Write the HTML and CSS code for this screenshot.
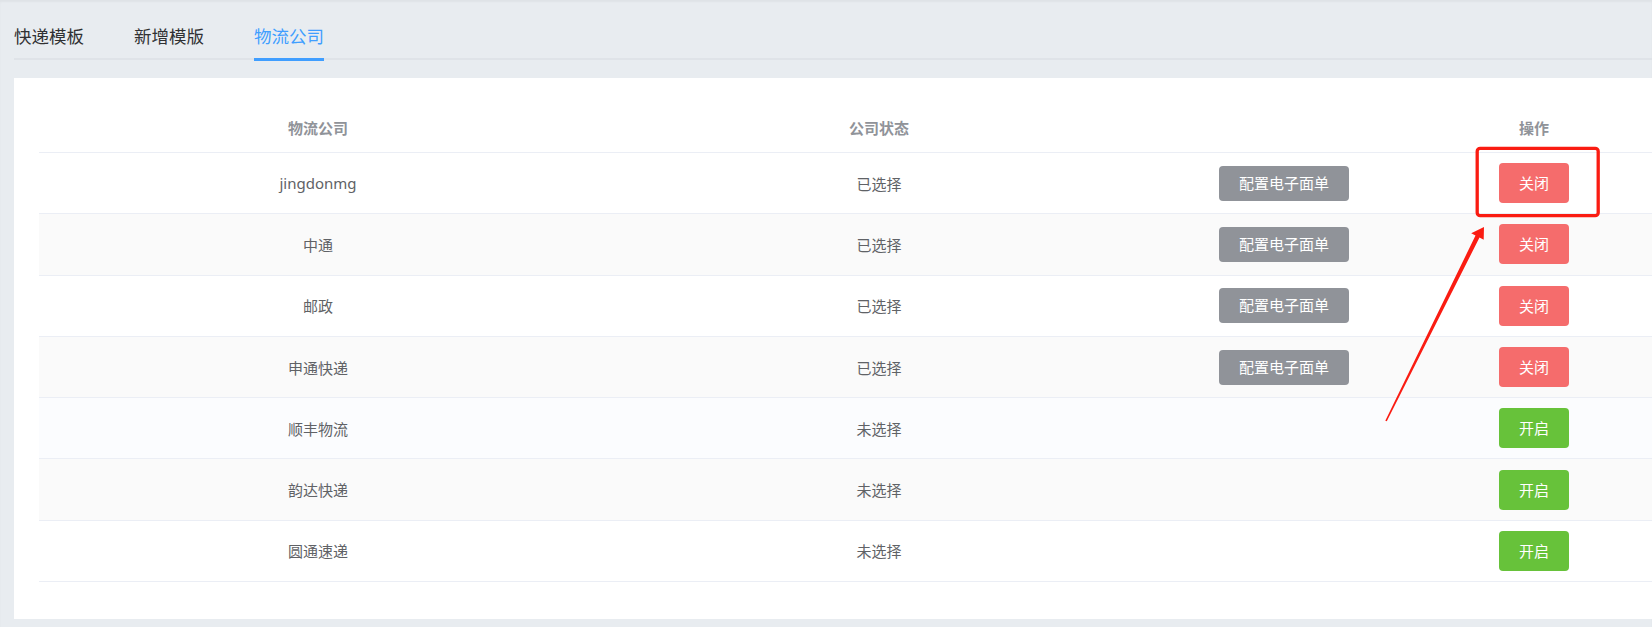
FILE: index.html
```html
<!DOCTYPE html>
<html lang="zh-CN">
<head>
<meta charset="utf-8" />
<title>物流公司</title>
<link rel="stylesheet" href="styles.css">
</head>
<body>
<div class="page">
  <div class="tabs">
    <div class="tab">快递模板</div>
    <div class="tab">新增模版</div>
    <div class="tab active">物流公司</div>
  </div>

  <div class="card">
    <table class="grid">
      <colgroup>
        <col class="c1" /><col class="c2" /><col class="c3" /><col class="c4" />
      </colgroup>
      <thead>
        <tr><th>物流公司</th><th>公司状态</th><th></th><th>操作</th></tr>
      </thead>
      <tbody>
        <tr>
          <td>jingdonmg</td><td>已选择</td>
          <td><span class="btn btn-info">配置电子面单</span></td>
          <td><span class="btn btn-danger">关闭</span></td>
        </tr>
        <tr class="stripe">
          <td>中通</td><td>已选择</td>
          <td><span class="btn btn-info">配置电子面单</span></td>
          <td><span class="btn btn-danger">关闭</span></td>
        </tr>
        <tr>
          <td>邮政</td><td>已选择</td>
          <td><span class="btn btn-info">配置电子面单</span></td>
          <td><span class="btn btn-danger">关闭</span></td>
        </tr>
        <tr class="stripe">
          <td>申通快递</td><td>已选择</td>
          <td><span class="btn btn-info">配置电子面单</span></td>
          <td><span class="btn btn-danger">关闭</span></td>
        </tr>
        <tr class="hover">
          <td>顺丰物流</td><td>未选择</td>
          <td></td>
          <td><span class="btn btn-success">开启</span></td>
        </tr>
        <tr class="stripe">
          <td>韵达快递</td><td>未选择</td>
          <td></td>
          <td><span class="btn btn-success">开启</span></td>
        </tr>
        <tr>
          <td>圆通速递</td><td>未选择</td>
          <td></td>
          <td><span class="btn btn-success">开启</span></td>
        </tr>
      </tbody>
    </table>
  </div>
</div>

<!-- screenshot annotation drawn over the table -->
<svg class="markup" width="1652" height="627" viewBox="0 0 1652 627">
  <rect x="1477.2" y="148.3" width="121" height="67.4" rx="3" fill="none" stroke="#fa1c12" stroke-width="3.3" />
  <polygon fill="#fa1c12" points="1484,227 1483.7,239.7 1479.5,237.5 1386.8,421.3 1385.3,420.7 1475.5,235.5 1471.2,233.3" />
</svg>
</body>
</html>
```

FILE: styles.css
```css
html, body { margin: 0; padding: 0; }
body {
  background: #e8ecf0;
  box-shadow: inset 0 2px 2px rgba(0, 0, 0, 0.04);
  font-family: "Noto Sans", "Noto Sans CJK SC", sans-serif;
  width: 1652px;
  height: 627px;
  overflow: hidden;
  position: relative;
}

.page { padding: 14px 0 8px 14px; }

.tabs {
  display: flex;
  height: 44px;
  border-bottom: 2px solid #dfe3e8;
}
.tab {
  position: relative;
  padding: 0 25px;
  line-height: 44px;
  font-size: 17.5px;
  color: #303133;
}
.tab:first-child { padding-left: 0; }
.tab.active { color: #409eff; }
.tab.active:after {
  content: "";
  position: absolute;
  left: 25px;
  right: 25px;
  bottom: -3px;
  height: 3px;
  background: #409eff;
}

.card {
  margin-top: 18px;
  width: 1622px;
  padding: 25px 25px 37px 25px;
  background: #fff;
}

.grid {
  width: 1622px;
  table-layout: fixed;
  border-collapse: collapse;
  font-size: 15px;
  color: #606266;
}
.grid col.c1 { width: 558px; }
.grid col.c2 { width: 564px; }
.grid col.c3 { width: 246px; }
.grid col.c4 { width: 254px; }

.grid th {
  height: 49px;
  padding: 0;
  font-weight: bold;
  color: #909399;
  text-align: center;
  border-bottom: 1px solid #ebeef5;
}
.grid td {
  height: 60.3px;
  padding: 0;
  text-align: center;
  border-bottom: 1px solid #ebeef5;
}
.grid tr.stripe td { background: #fafafa; }
.grid tr.hover td { background: #fbfcfe; }

.btn {
  display: inline-block;
  vertical-align: middle;
  color: #fff;
  font-size: 15px;
  border-radius: 4px;
  text-align: center;
}
.btn-info { width: 130px; height: 35px; line-height: 35px; background: #909399; }
.btn-danger { width: 70px; height: 40px; line-height: 40px; background: #f56c6c; }
.btn-success { width: 70px; height: 40px; line-height: 40px; background: #67c23a; }

.markup {
  position: absolute;
  left: 0;
  top: 0;
  pointer-events: none;
}
```
